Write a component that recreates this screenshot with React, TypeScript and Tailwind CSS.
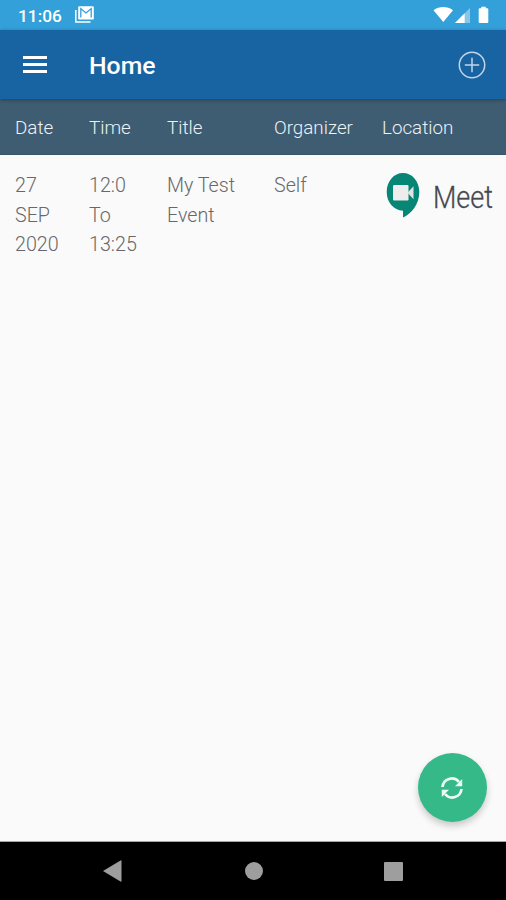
import React from 'react';

interface MeetingEvent {
  id: number;
  date: string[];
  time: string[];
  title: string;
  organizer: string;
}

const columns = ['Date', 'Time', 'Title', 'Organizer', 'Location'];

const events: MeetingEvent[] = [
  {
    id: 1,
    date: ['27', 'SEP', '2020'],
    time: ['12:0', 'To', '13:25'],
    title: 'My Test Event',
    organizer: 'Self',
  },
];

const StatusBar: React.FC = () => (
  <div className="h-[30px] shrink-0 bg-[#34a0da] flex items-center justify-between pl-[18px] pr-[16px] text-white">
    <div className="flex items-center gap-[12px]">
      <span className="w-[45px] text-[17.3px] leading-none font-medium whitespace-nowrap pt-[4px]">11:06</span>
      <svg width="19" height="17" viewBox="0 0 19 17" fill="none">
        <path d="M0.8 4v11.9h14.7" stroke="currentColor" strokeWidth="1.5" />
        <rect x="3.2" y="0.2" width="15.6" height="13.4" rx="1.2" fill="currentColor" />
        <path d="M5.8 11.6V2.6L11 7l5.2-4.400v9" stroke="#34a0da" strokeWidth="1.3" />
      </svg>
    </div>
    <svg width="57" height="18" viewBox="0 0 57 18" fill="currentColor">
      <path d="M0.5 4.2C6.3-0.2 14.2-0.2 20 4.2L10.3 16z" />
      <path d="M37 2v15H22z" fillOpacity="0.4" />
      <path d="M31.7 7.3V17H22z" />
      <path d="M48.3 2.3V0.7h4.5v1.6h1.5a1 1 0 0 1 1 1V16a1 1 0 0 1-1 1h-7.6a1 1 0 0 1-1-1V3.3a1 1 0 0 1 1-1z" />
    </svg>
  </div>
);

const AppBar: React.FC = () => (
  <header className="relative z-10 h-[69px] shrink-0 bg-[#1864a3] flex items-center pl-[23px] pr-[20px] text-white shadow-[0_1px_4px_rgba(0,0,0,0.35)]">
    <button type="button" aria-label="Menu" className="w-[24px] flex flex-col gap-[4px]">
      <span className="h-[3px] bg-white" />
      <span className="h-[3px] bg-white" />
      <span className="h-[3px] bg-white" />
    </button>
    <h1 className="ml-[42px] text-[24.8px] leading-none font-medium pt-[4px]">Home</h1>
    <button type="button" aria-label="Add event" className="ml-auto text-[#c3d6e8]">
      <svg width="28" height="28" viewBox="0 0 28 28" fill="none" stroke="currentColor" strokeWidth="1.5">
        <circle cx="14" cy="14" r="12.7" />
        <path d="M14 6.8v14.4M6.8 14h14.4" />
      </svg>
    </button>
  </header>
);

const MeetLogo: React.FC = () => (
  <div className="flex items-start pl-[4px] pt-[1px]">
    <svg width="34" height="46" viewBox="0 0 34 46" className="shrink-0">
      <path
        d="M17 1C8 1 0.7 9 0.7 20C0.7 30.5 7.5 38 17 38.700V45.500C25 42 33.3 32.500 33.3 20C33.3 9 26 1 17 1z"
        fill="#078575"
      />
      <rect x="7" y="13" width="15.500" height="15.500" rx="1.200" fill="#ededed" />
      <path d="M21.500 20.700l6-6.500v13z" fill="#e0e5e3" />
    </svg>
    <span className="ml-[13px] mt-[10px] w-[60px] origin-left scale-x-[0.87] text-[31px] leading-[32px] font-light text-[#45484d] whitespace-nowrap [-webkit-text-stroke:0.3px_#45484d]">
      Meet
    </span>
  </div>
);

const EventRow: React.FC<{ event: MeetingEvent }> = ({ event }) => (
  <div className="grid grid-cols-[74px_78px_107px_108px_1fr] pl-[15px] pt-[16px] text-[19.7px] leading-[29.5px] font-light text-[#686868]">
    <div>
      {event.date.map((line) => (
        <p key={line}>{line}</p>
      ))}
    </div>
    <div>
      {event.time.map((line) => (
        <p key={line}>{line}</p>
      ))}
    </div>
    <p className="w-[78px]">{event.title}</p>
    <p>{event.organizer}</p>
    <MeetLogo />
  </div>
);

const RefreshButton: React.FC = () => (
  <button
    type="button"
    aria-label="Refresh"
    className="absolute right-[19px] bottom-[19px] w-[69px] h-[69px] rounded-full bg-[#36b989] flex items-center justify-center shadow-[0_4px_7px_rgba(0,0,0,0.2)]"
  >
    <svg width="22" height="22" viewBox="0 0 22 22" fill="none" stroke="#eefaf5" strokeWidth="2.7" className="mr-[1px]">
      <path d="M1.500 10A9.300 9.300 0 0 1 18 5" />
      <path d="M20.500 12A9.300 9.300 0 0 1 4 17" />
      <path d="M21.200 2v7.200h-7.200z" fill="#eefaf5" stroke="none" />
      <path d="M0.800 20v-7.200h7.200z" fill="#eefaf5" stroke="none" />
    </svg>
  </button>
);

const NavigationBar: React.FC = () => (
  <nav className="h-[59px] shrink-0 bg-black border-t border-[#a5a5a5] flex items-center justify-between pl-[102px] pr-[103px]">
    <svg width="21" height="22" viewBox="0 0 21 22" fill="#9e9e9e">
      <path d="M1 11L18.500 0.500a0.700 0.700 0 0 1 1 0.600v19.800a0.700 0.700 0 0 1-1 0.600z" />
    </svg>
    <span className="w-[18px] h-[18px] rounded-full bg-[#9e9e9e]" />
    <span className="w-[19px] h-[19px] rounded-[1px] bg-[#9e9e9e]" />
  </nav>
);

export default function App() {
  return (
    <div className="w-full h-screen flex flex-col overflow-hidden bg-[#fafafa] font-[Roboto,sans-serif]">
      <StatusBar />
      <AppBar />
      <main className="relative flex-1">
        <div className="h-[56px] grid grid-cols-[74px_78px_107px_108px_1fr] items-center pl-[15px] pt-[3px] bg-[#3f5d72] border-b border-[#37556b] text-[18.8px] font-light text-[#eef2f5]">
          {columns.map((name) => (
            <span key={name}>{name}</span>
          ))}
        </div>
        {events.map((event) => (
          <EventRow key={event.id} event={event} />
        ))}
        <RefreshButton />
      </main>
      <NavigationBar />
    </div>
  );
}
